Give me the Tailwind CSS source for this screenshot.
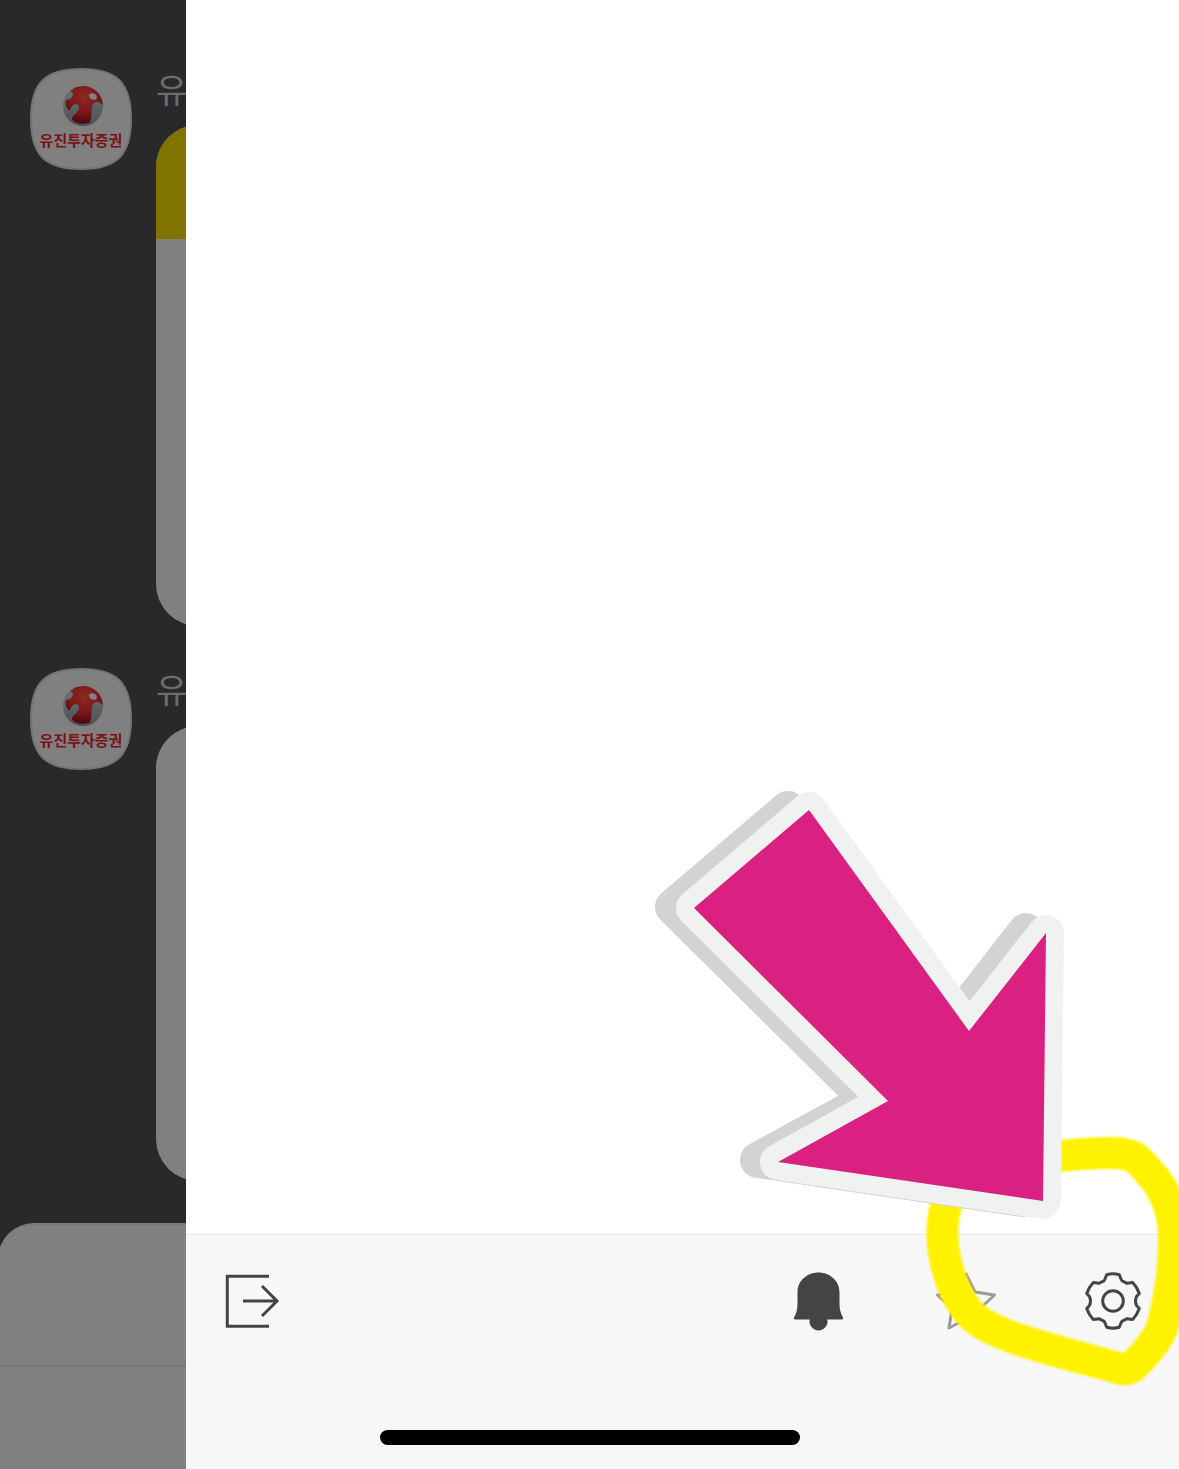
<!DOCTYPE html>
<html lang="ko">
<head>
<meta charset="utf-8">
<meta name="viewport" content="width=device-width, initial-scale=1">
<title>유진투자증권</title>
<script src="https://cdn.jsdelivr.net/npm/@tailwindcss/browser@4"></script>
</head>
<body class="bg-[#292929] font-['Noto_Sans_CJK_KR',sans-serif]">
<!-- Shared logo shapes -->
<svg class="absolute size-0" aria-hidden="true">
  <defs>
    <radialGradient id="ball" cx="0.5" cy="0.3" r="0.7">
      <stop offset="0" stop-color="#8a2a20"/><stop offset="0.55" stop-color="#7c181a"/><stop offset="1" stop-color="#4c080c"/>
    </radialGradient>
    <linearGradient id="steel" x1="0" y1="0" x2="0" y2="1">
      <stop offset="0" stop-color="#70757a"/><stop offset="1" stop-color="#4b5055"/>
    </linearGradient>
    <symbol id="tile" viewBox="0 0 102 102">
      <path d="M51 1C87 1 101 15 101 51S87 101 51 101 1 87 1 51 15 1 51 1Z" fill="#808080" stroke="#747474" stroke-width="2"/>
    </symbol>
    <symbol id="globe" viewBox="0 0 40 40">
      <circle cx="20" cy="20" r="20" fill="url(#steel)"/>
      <path d="M6 6C10 2 15 0 20 0C31 0 40 9 40 20C38 15 30 14 29 21C28 28 29 34 26 37C20 39 10 37 9 33C9 28 17 27 16 20C14 16 8 18 7 25C3 23 2 17 3 14C8 14 12 9 9 6C8 5 7 5 6 6Z" fill="url(#ball)"/>
      <ellipse cx="30" cy="10.500" rx="4" ry="3" transform="rotate(25 30 10.500)" fill="#808488"/>
    </symbol>
  </defs>
</svg>

<div class="relative flex min-h-screen overflow-hidden">
  <aside class="flex w-[186px] shrink-0 flex-col overflow-hidden pt-[68px]">
    <article class="mb-[42px] flex gap-6 pl-[30px]">
      <div class="relative size-[102px] shrink-0">
        <svg class="size-full" aria-hidden="true"><use href="#tile"/></svg>
        <div class="absolute inset-0 flex flex-col items-center pt-[18px]">
          <svg class="ml-1 size-10" aria-hidden="true"><use href="#globe"/></svg>
          <span class="mt-1 text-[15px] leading-5 font-bold whitespace-nowrap text-[#7a1218]">유진투자증권</span>
        </div>
      </div>
      <div class="w-[30px] overflow-hidden">
        <h2 class="h-[57px] text-[34px] leading-[42px] font-normal text-[#6c6c6c]">유</h2>
        <div class="h-[501px] w-80 overflow-hidden rounded-[42px] bg-[#808080]">
          <div class="h-[114px] bg-[#807300]"></div>
        </div>
      </div>
    </article>
    <article class="mb-[42px] flex gap-6 pl-[30px]">
      <div class="relative size-[102px] shrink-0">
        <svg class="size-full" aria-hidden="true"><use href="#tile"/></svg>
        <div class="absolute inset-0 flex flex-col items-center pt-[18px]">
          <svg class="ml-1 size-10" aria-hidden="true"><use href="#globe"/></svg>
          <span class="mt-1 text-[15px] leading-5 font-bold whitespace-nowrap text-[#7a1218]">유진투자증권</span>
        </div>
      </div>
      <div class="w-[30px] overflow-hidden">
        <h2 class="h-[58px] text-[34px] leading-[42px] font-normal text-[#6c6c6c]">유</h2>
        <div class="h-[455px] w-80 rounded-[42px] bg-[#808080]"></div>
      </div>
    </article>
    <div class="-ml-0.5 flex-1 rounded-tl-[36px] border-t-2 border-[#787878] bg-[#808080]">
      <div class="h-[142px] border-b-2 border-[#767676]"></div>
    </div>
  </aside>

  <main class="flex flex-1 flex-col bg-white">
    <div class="flex-1"></div>
    <footer class="flex h-[235px] items-start justify-between border-t border-[#e5e5e5] bg-[#f7f7f7] px-9 pt-9">
      <button type="button" aria-label="나가기" class="size-[60px]">
        <svg viewBox="0 0 60 60" fill="none" stroke="#444" stroke-width="3"><path d="M47 5.300H5.300V55.300H47M21 30H55M40 15L55 30L40 45"/></svg>
      </button>
      <div class="flex gap-[87px]">
        <button type="button" aria-label="알림" class="size-[60px]">
          <svg viewBox="0 0 60 60" fill="#444"><path d="M29.500 1.500C41 1.500 50.500 10 50.500 21V33C50.500 39 52 43 54 46.500Q54.500 48.500 53 48.500H38.300A9 9 0 1 1 20.700 48.500H6Q4.500 48.500 5 46.500C7 43 8.500 39 8.500 33V21C8.500 10 18 1.500 29.500 1.500Z"/></svg>
        </button>
        <button type="button" aria-label="즐겨찾기" class="size-[60px]">
          <svg viewBox="0 0 60 60" fill="none" stroke="#9a9a9a" stroke-width="3" stroke-linejoin="round"><path d="M30 3L39 21L58.500 24L44 37.500L47 57L30 48L13 57L16 37.500L1.500 24L21 21Z"/></svg>
        </button>
        <button type="button" aria-label="설정" class="size-[60px]">
          <svg viewBox="0 0 60 60" fill="none" stroke="#444" stroke-width="3" stroke-linejoin="round"><circle cx="30" cy="30" r="10.300"/><path d="M23.700 3.700Q30 2 36.300 3.700L38 8Q38.500 10 40.500 10.500L44 12.300L49.700 11.500Q54 16 56.300 22.500L53.500 25.500Q51.500 30 53.500 34.500L56.300 37.500Q54 44 49.700 48.500L44 47.700L40.500 49.500Q38.500 50 38 52L36.300 56.300Q30 58 23.700 56.300L22 52Q21.500 50 19.500 49.500L16 47.700L10.300 48.500Q6 44 3.700 37.500L6.500 34.500Q8.500 30 6.500 25.500L3.700 22.500Q6 16 10.300 11.500L16 12.300L19.500 10.500Q21.500 10 22 8Z"/></svg>
        </button>
      </div>
    </footer>
  </main>

  <!-- Marker ring and arrow pointing at the settings button -->
  <svg class="pointer-events-none absolute right-0 bottom-0 h-[699px] w-[539px]" viewBox="640 770 539 699" aria-hidden="true">
    <path class="blur-[1px]" d="M1040 1158C1065 1155 1090 1153 1112 1153C1123 1153 1132 1155 1138 1160C1144 1166 1150 1173 1156 1180C1168 1197 1175 1218 1174 1243C1174 1275 1168 1305 1162 1328C1157 1341 1143 1357 1132 1367Q1126 1371 1118 1368C1090 1360 1050 1350 1020 1340C982 1327 970 1318 959 1298C947 1275 935 1235 948 1200" fill="none" stroke="#fff200" stroke-width="32" stroke-linejoin="round"/>
    <path d="M788 809L949 1030L1026 931L1023 1199L758 1160L868 1100L673 907Z" fill="#d2d3d5" stroke="#d2d3d5" stroke-width="36" stroke-linejoin="round"/>
    <path d="M809 810L969 1031L1046 933L1043 1201L778 1162L888 1101L694 908Z" fill="#f0f2f1" stroke="#f0f2f1" stroke-width="36" stroke-linejoin="round"/>
    <path d="M809 810L969 1031L1046 933L1043 1201L778 1162L888 1101L694 908Z" fill="#da2080"/>
  </svg>

  <div class="absolute bottom-6 left-1/2 h-[15px] w-[420px] -translate-x-1/2 rounded-full bg-black"></div>
</div>
</body>
</html>
